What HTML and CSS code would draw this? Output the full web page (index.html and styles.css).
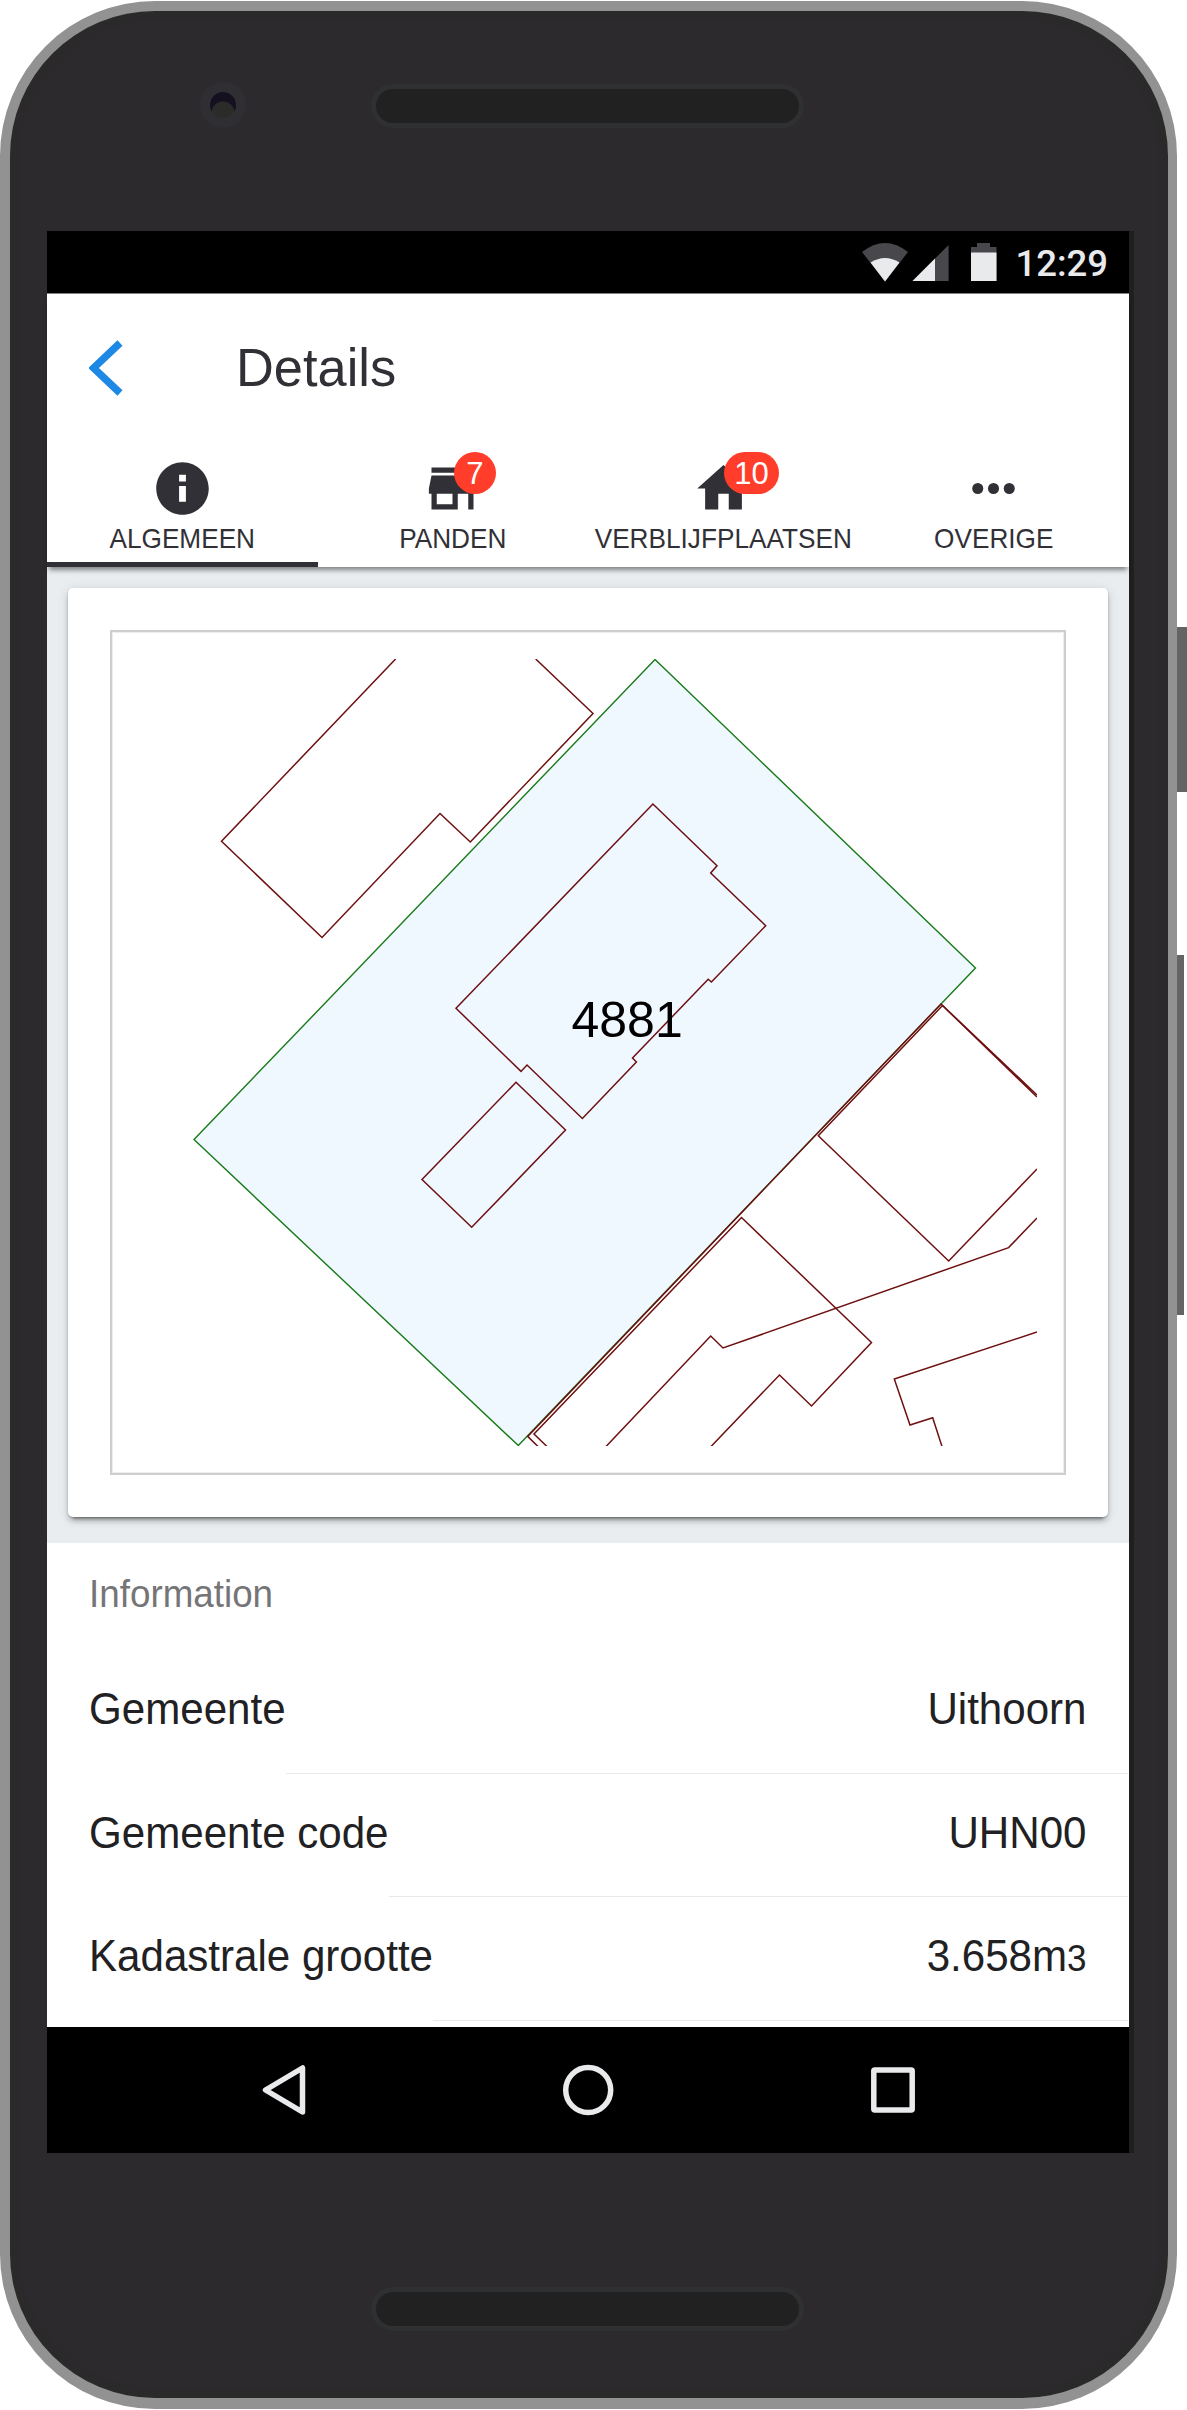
FILE: index.html
```html
<!DOCTYPE html>
<html lang="nl">
<head>
<meta charset="utf-8">
<title>Details</title>
<link rel="stylesheet" href="styles.css">
</head>
<body>
<div class="device">
  <div class="frame">
    <div class="bezel-top">
      <span class="camera"><span class="lens"></span></span>
      <span class="speaker"></span>
    </div>
    <div class="screen">
      <div class="statusbar">
        <svg class="status-icons" width="136" height="40" viewBox="861 242 136 40">
          <path d="M862 252Q885 234 908 252L885 281.500Z" fill="#48474c"/>
          <path d="M870.500 262.500Q885 253.500 899.500 262.500L885 281.500Z" fill="#e9eaec"/>
          <path d="M948.600 245V281H912.500Z" fill="#48474c"/>
          <path d="M935 258.500V281H912.500Z" fill="#e9eaec"/>
          <path d="M971 281V247H977V243H990V247H996.500V281Z" fill="#48474c"/>
          <path d="M971 252.500H996.500V281H971Z" fill="#e9eaec"/>
        </svg>
        <span class="clock">12:29</span>
      </div>
      <header class="header">
        <div class="toolbar">
          <svg class="back" width="34" height="56" viewBox="0 0 34 56"><path d="M31 3L4.500 28L31 53" fill="none" stroke="#1e88e5" stroke-width="7.400"/></svg>
          <h1 class="title">Details</h1>
        </div>
        <nav class="tabs">
          <a class="tab tab-active">
            <span class="tab-icon"><svg viewBox="0 0 24 24"><path d="M12 2C6.480 2 2 6.480 2 12s4.480 10 10 10 10-4.480 10-10S17.520 2 12 2zm1.300 15h-2.600v-6h2.600v6zm0-7.700h-2.600V6.800h2.600v2.500z"/></svg></span>
            <span class="tab-label">ALGEMEEN</span>
          </a>
          <a class="tab">
            <span class="tab-icon"><svg viewBox="0 0 24 24"><path d="M20 4H4v2h16V4zm1 10v-2l-1-5H4l-1 5v2h1v6h10v-6h4v6h2v-6h1zm-9 4H6v-4h6v4z"/></svg><span class="badge">7</span></span>
            <span class="tab-label">PANDEN</span>
          </a>
          <a class="tab">
            <span class="tab-icon"><svg viewBox="0 0 24 24"><path d="M10 20v-6h4v6h5v-8h3L12 3 2 12h3v8z"/></svg><span class="badge">10</span></span>
            <span class="tab-label">VERBLIJFPLAATSEN</span>
          </a>
          <a class="tab">
            <span class="tab-icon"><svg viewBox="0 0 24 24"><circle cx="6" cy="12" r="2.100"/><circle cx="12" cy="12" r="2.100"/><circle cx="18" cy="12" r="2.100"/></svg></span>
            <span class="tab-label">OVERIGE</span>
          </a>
        </nav>
      </header>
      <main class="content">
        <section class="card">
          <div class="map">
            <svg width="899" height="787" viewBox="138 659 899 787">
              <path class="parcel" d="M655 659.500L975.500 968L518.300 1445.500L194 1139.600Z"/>
              <g class="building">
                <path d="M395.600 659L221.500 841.300L322 937.500L440 813.500L470.300 842L593 713.500L535.700 659"/>
                <path d="M652.900 804L717 865.800L710.700 873L765.700 925.700L711.400 982L708.200 979.300L632.500 1058L636.400 1062L582.400 1118.500L527 1065L521 1071.400L456 1008.300Z"/>
                <path d="M516 1082.300L565.500 1130L471.700 1227.300L422 1179.600Z"/>
                <path d="M1037 1095L941 1004L527.700 1436.400L538 1446.500"/>
                <path d="M1037 1097L942.500 1005.500L818.300 1135.700L948.700 1261L1037 1169"/>
                <path d="M547 1446.500L534 1434L741.500 1217.500L871.500 1342.500L811.500 1406L779.500 1375L711 1446.500"/>
                <path d="M606 1446.500L710.700 1336L723 1348L1008.600 1247.600L1037 1218"/>
                <path d="M1037 1332L894.300 1379L910 1425L932.700 1417.700L942 1446.500"/>
              </g>
              <text class="parcel-label" x="571.500" y="1036.500">4881</text>
            </svg>
          </div>
        </section>
      </main>
      <section class="list">
        <h2 class="list-header">Information</h2>
        <div class="item"><span class="item-label">Gemeente</span><span class="item-value"><span class="item-text">Uithoorn</span></span></div>
        <div class="item"><span class="item-label">Gemeente code</span><span class="item-value"><span class="item-text">UHN00</span></span></div>
        <div class="item"><span class="item-label">Kadastrale grootte</span><span class="item-value"><span class="item-text">3.658m<small>3</small></span></span></div>
      </section>
      <footer class="navbar">
        <svg width="1082" height="126" viewBox="47 2027 1082 126">
          <g fill="none" stroke="#e9eaec" stroke-width="5.500" stroke-linejoin="round">
            <path d="M265.500 2090L302.500 2068V2112Z"/>
            <circle cx="588.200" cy="2090" r="22.500"/>
            <rect x="873.800" y="2070" width="38.400" height="40" rx="1"/>
          </g>
        </svg>
      </footer>
    </div>
    <div class="bezel-bottom"><span class="speaker"></span></div>
  </div>
  <div class="side">
    <span class="power"></span>
    <span class="volume"></span>
  </div>
</div>
</body>
</html>
```
FILE: styles.css
```css
* { box-sizing: border-box; }

body {
  margin: 0;
  background: #fff;
  font-family: "Liberation Sans", Arial, sans-serif;
}

.device {
  display: flex;
  width: 1187px;
  height: 2410px;
  padding: 1px 0;
}

.frame {
  display: flex;
  flex-direction: column;
  width: 1177px;
  height: 2408px;
  border: solid #929292;
  border-width: 10px 9px 11px 10px;
  border-radius: 155px;
  background: #2c2a2c;
  box-shadow: inset 0 0 5px 4px #2b2b2a;
}

/* Bezel hardware */
.bezel-top {
  display: flex;
  align-items: flex-start;
  height: 220px;
  padding: 71px 0 0 190px;
}

.camera {
  width: 46px;
  height: 46px;
  margin-right: 125px;
  padding: 10px;
  border-radius: 50%;
  background: #2f2e33;
}

.lens {
  display: block;
  width: 26px;
  height: 26px;
  border-radius: 50%;
  background: radial-gradient(circle at 13px 21px, #2b2b2a 11px, #15101f 12px);
}

.speaker {
  width: 433px;
  height: 44px;
  margin-top: 2px;
  border: 5.500px solid #2f3032;
  border-radius: 22px;
  background: #212121;
}

.bezel-bottom {
  height: 245px;
  padding: 134px 0 0 361px;
  display: flex;
}

.bezel-bottom .speaker { margin: 0; }

.side { width: 10px; }

.power,
.volume {
  display: block;
  background: #646464;
}

.power {
  width: 10px;
  height: 165px;
  margin-top: 626px;
}

.volume {
  width: 7px;
  height: 360px;
  margin-top: 163px;
}

/* Screen */
.screen {
  display: flex;
  flex-direction: column;
  width: 1082px;
  height: 1922px;
  margin-left: 37px;
  background: #fff;
  box-shadow: 5px 0 0 #201f20;
}

.statusbar {
  display: flex;
  justify-content: flex-end;
  gap: 18px;
  height: 63px;
  padding: 11px 21px 0 0;
  background: #000;
  border-bottom: 1px solid #808080;
}

.clock {
  padding-top: 1px;
  font: 500 36.500px/42px Roboto, sans-serif;
  color: #e9eaec;
}

.header {
  position: relative;
  height: 273px;
  background: #fff;
  box-shadow: 0 5px 5px -2px rgba(0, 0, 0, .45);
}

.toolbar {
  display: flex;
  align-items: center;
  height: 148px;
  padding-left: 42px;
}

.title {
  margin: 0 0 0 113px;
  font-size: 52.400px;
  font-weight: 400;
  line-height: 60px;
  color: #313036;
  transform: scaleY(1.04);
  transform-origin: 0 80%;
}

.tabs {
  display: grid;
  grid-template-columns: repeat(4, 1fr);
  height: 125px;
}

.tab {
  display: flex;
  flex-direction: column;
  align-items: center;
  padding-top: 15px;
  color: #313036;
}

.tab-active { border-bottom: 5.500px solid #313036; }

.tab-icon {
  position: relative;
  width: 63px;
  height: 63px;
}

.tab-icon svg {
  display: block;
  width: 63px;
  height: 63px;
  fill: currentColor;
}

.tab-label {
  margin-top: 4px;
  font-size: 26.200px;
  line-height: 30px;
  transform: scaleY(1.04);
  transform-origin: 50% 80%;
}

.badge {
  position: absolute;
  top: -5.500px;
  left: 32.500px;
  min-width: 42px;
  height: 42px;
  padding: 0 10px;
  border-radius: 21px;
  background: #ff3d2a;
  color: #fff;
  font-size: 31px;
  line-height: 43px;
  text-align: center;
}

.content {
  height: 976px;
  padding: 21px 21.500px 26px 21px;
  background: #e9edf0;
}

.card {
  height: 929px;
  padding: 42px 41.500px 42px 42px;
  border-radius: 5px;
  background: #fff;
  box-shadow: 0 5px 5px rgba(0, 0, 0, .14), 0 7px 3px -5px rgba(0, 0, 0, .3), 0 2px 12px rgba(0, 0, 0, .12), 0 1px 2px rgba(0, 0, 0, .2);
}

.map {
  height: 845px;
  padding: 27px 26px;
  border: 2.600px solid #cecece;
  box-shadow: inset 0 0 0 1px #ededed;
}

.map svg { display: block; }

.parcel {
  fill: #eff7ff;
  stroke: #187a18;
  stroke-width: 1.400;
}

.building {
  fill: none;
  stroke: #6e1010;
  stroke-width: 1.500;
}

.parcel-label {
  font-size: 50px;
  fill: #000;
}

.list-header {
  height: 107px;
  margin: 0;
  padding: 29px 0 0 42px;
  font-size: 36.800px;
  font-weight: 400;
  line-height: 45px;
  color: #757578;
  transform: scaleY(1.04);
  transform-origin: 0 60%;
}

.item {
  display: flex;
  height: 123.500px;
  padding-left: 42px;
  font-size: 42.100px;
  line-height: 120px;
  color: #212123;
}

.item-label,
.item-text {
  transform: scaleY(1.04);
  transform-origin: 0 62%;
}

.item-text { display: block; }

.item-value {
  flex: 1;
  margin-right: 1px;
  padding-right: 41.500px;
  border-bottom: 1.400px solid #e9e9e9;
  text-align: right;
}

.item-value small { font-size: 35px; }

.navbar {
  height: 126px;
  margin-top: auto;
  background: #000;
}

.navbar svg { display: block; }
```
